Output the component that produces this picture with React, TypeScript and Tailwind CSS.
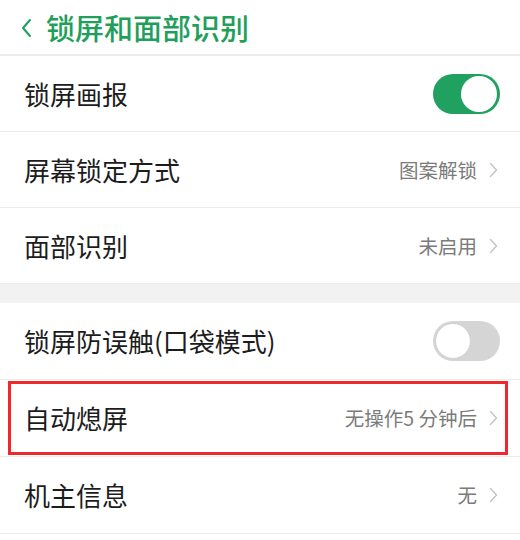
import React from 'react';

type Row = {
  label: string;
  value?: string;
  toggle?: boolean;
  highlight?: boolean;
};

const groupA: Row[] = [
  { label: '锁屏画报', toggle: true },
  { label: '屏幕锁定方式', value: '图案解锁' },
  { label: '面部识别', value: '未启用' },
];

const groupB: Row[] = [
  { label: '锁屏防误触(口袋模式)', toggle: false },
  { label: '自动熄屏', value: '无操作5 分钟后', highlight: true },
  { label: '机主信息', value: '无' },
];

function Chevron({ className }: { className?: string }) {
  return (
    <svg width="9" height="16" viewBox="0 0 9 16" fill="none" className={className}>
      <path d="M1.5 1.5 L7.5 8 L1.5 14.5" stroke="currentColor" strokeWidth="1.4" strokeLinecap="round" strokeLinejoin="round" />
    </svg>
  );
}

function Toggle({ on }: { on: boolean }) {
  return (
    <div
      className={
        on
          ? 'w-[67px] h-[40px] rounded-full bg-[#21a15f] flex items-center justify-end pr-[3px]'
          : 'w-[67px] h-[40px] rounded-full bg-[#d5d5d5] flex items-center justify-start pl-[2px]'
      }
    >
      <div
        className={
          on
            ? 'w-[36px] h-[36px] rounded-full bg-white'
            : 'w-[36px] h-[36px] rounded-full bg-white border border-[#cfcfcf]'
        }
      />
    </div>
  );
}

function SettingRow({ row, tall }: { row: Row; tall?: boolean }) {
  return (
    <div
      className={
        (tall ? 'h-[77px] ' : 'h-[76px] ') +
        'relative flex items-center justify-between pl-[24px] pr-[20px] border-b border-[#ebebeb]'
      }
    >
      <span className="text-[26px] text-[#1c1c1c] leading-none">{row.label}</span>
      {row.toggle !== undefined ? (
        <Toggle on={row.toggle} />
      ) : (
        <div className="flex items-center gap-[12px] pr-[2px]">
          <span className="text-[19.5px] text-[#7b7b7b] leading-none">{row.value}</span>
          <Chevron className="text-[#c4c4c4]" />
        </div>
      )}
      {row.highlight && (
        <div className="absolute left-[8px] right-[12px] top-[1px] bottom-[1px] border-[3px] border-[#f0282b]" />
      )}
    </div>
  );
}

export default function App() {
  return (
    <div
      className="w-[520px] h-[540px] bg-white overflow-hidden"
      style={{ fontFamily: '"Noto Sans CJK SC", "Noto Sans", sans-serif' }}
    >
      {/* Header */}
      <div className="h-[56px] flex items-center pl-[20px] border-b-2 border-[#ececec]">
        <svg width="14" height="20" viewBox="0 0 14 20" fill="none" className="text-[#1f9f5b] mt-[1px]">
          <path d="M10 2 L3 10 L10 18" stroke="currentColor" strokeWidth="2" strokeLinecap="round" strokeLinejoin="round" />
        </svg>
        <span className="ml-[12px] text-[29px] font-medium text-[#1f9f5b] leading-none">锁屏和面部识别</span>
      </div>

      {groupA.map(r => (
        <SettingRow key={r.label} row={r} />
      ))}

      <div className="h-[19px] bg-[#f2f2f2]" />

      {groupB.map(r => (
        <SettingRow key={r.label} row={r} tall />
      ))}
    </div>
  );
}
